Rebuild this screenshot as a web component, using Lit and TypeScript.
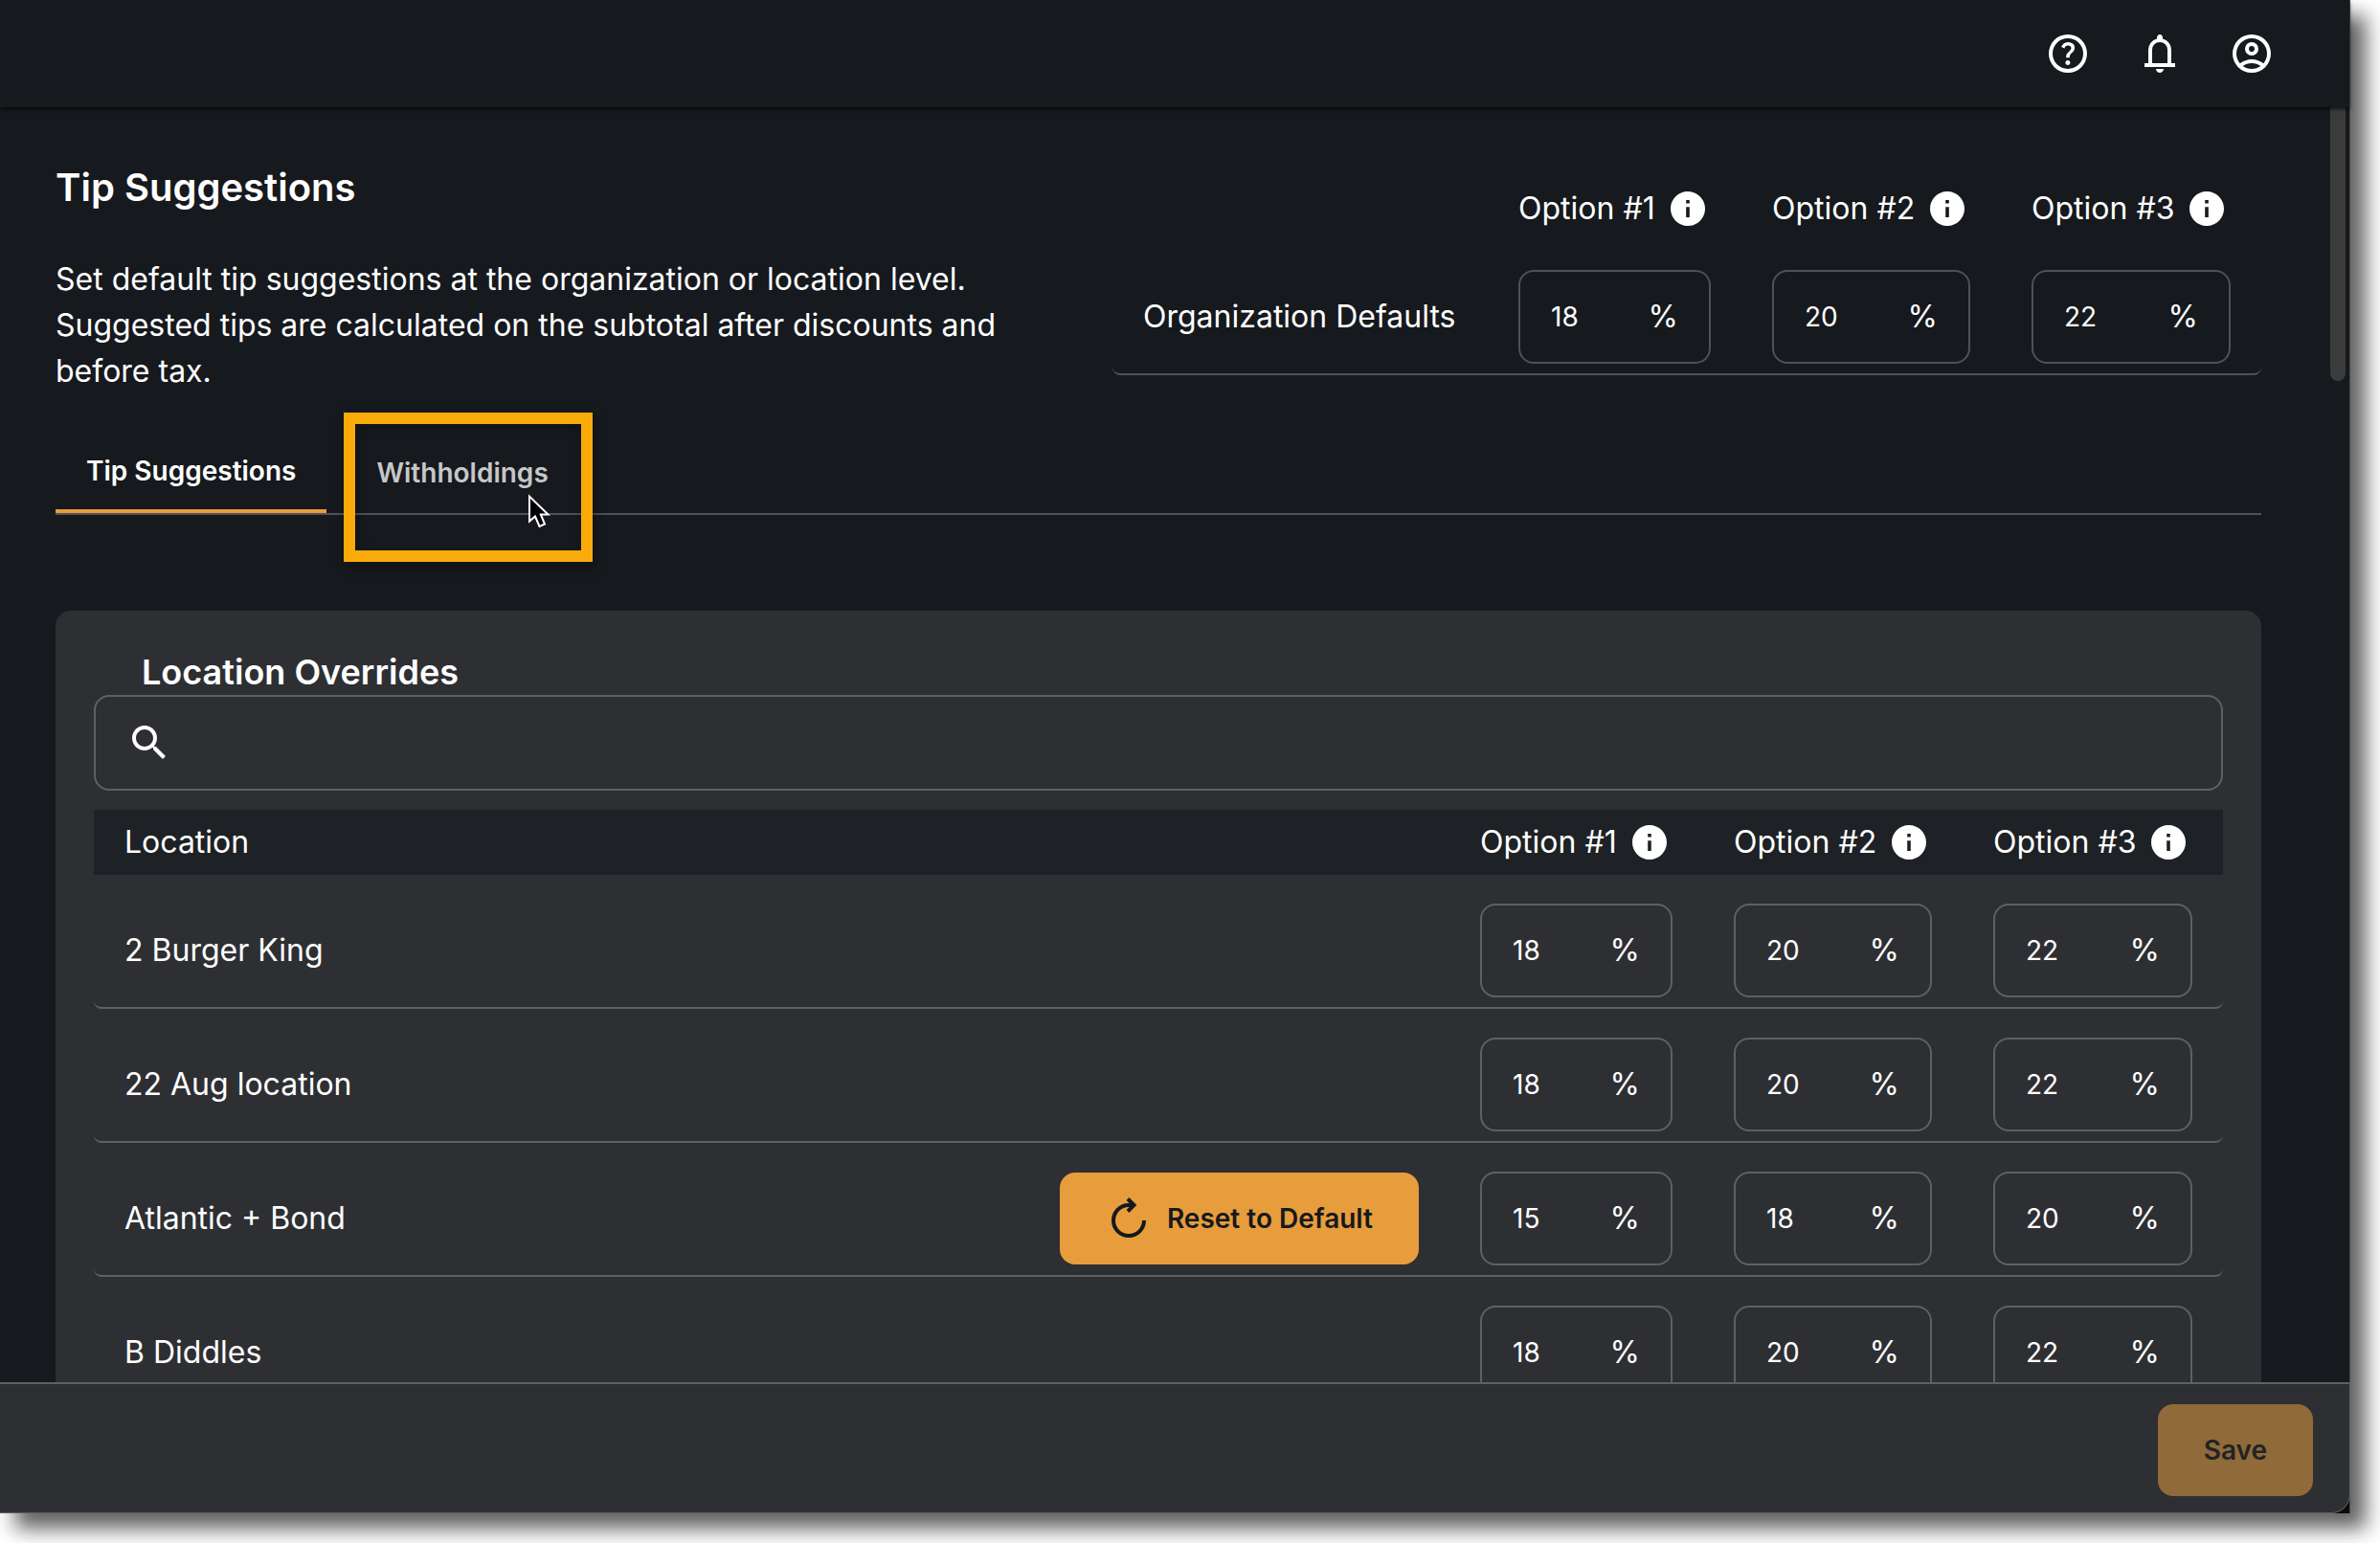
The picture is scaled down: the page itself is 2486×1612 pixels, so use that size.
import { LitElement, html, css, svg } from "lit";
import { customElement, state } from "lit/decorators.js";

interface LocationRow {
  name: string;
  tips: number[];
  overridden?: boolean;
}

const HELP =
  "M478-240q21 0 35.5-14.5T528-290q0-21-14.5-35.5T478-340q-21 0-35.5 14.5T428-290q0 21 14.5 35.5T478-240Zm-36-154h74q0-33 7.5-52t42.5-52q26-26 41-49.5t15-56.5q0-56-41-86t-97-30q-57 0-92.5 30T342-618l66 26q5-18 22.5-39t53.5-21q32 0 48 17.5t16 38.5q0 20-12 37.5T506-526q-44 39-54 59t-10 73Zm38 314q-83 0-156-31.5T197-197q-54-54-85.5-127T80-480q0-83 31.5-156T197-763q54-54 127-85.5T480-880q83 0 156 31.5T763-763q54 54 85.5 127T880-480q0 83-31.5 156T763-197q-54 54-127 85.5T480-80Zm0-80q134 0 227-93t93-227q0-134-93-227t-227-93q-134 0-227 93t-93 227q0 134 93 227t227 93Z";
const BELL =
  "M160-200v-80h80v-280q0-83 50-147.5T420-792v-28q0-25 17.5-42.5T480-880t42.5 17.5T540-820v28q80 20 130 84.5T720-560v280h80v80H160Zm320 120q-33 0-56.5-23.5T400-160h160q0 33-23.5 56.5T480-80ZM320-280h320v-280q0-66-47-113t-113-47q-66 0-113 47t-47 113v280Z";
const ACCOUNT =
  "M234-276q51-39 114-61.5T480-360q69 0 132 22.5T726-276q35-41 54.5-93T800-480q0-133-93.5-226.5T480-800q-133 0-226.5 93.5T160-480q0 59 19.5 111t54.5 93Zm246-164q-59 0-99.5-40.5T340-580q0-59 40.5-99.5T480-720q59 0 99.5 40.5T620-580q0 59-40.5 99.5T480-440Zm0 360q-83 0-156-31.5T197-197q-54-54-85.5-127T80-480q0-83 31.5-156T197-763q54-54 127-85.5T480-880q83 0 156 31.5T763-763q54 54 85.5 127T880-480q0 83-31.5 156T763-197q-54 54-127 85.5T480-80Zm0-80q53 0 100-15.5t86-44.5q-39-29-86-44.5T480-280q-53 0-100 15.5T294-220q39 29 86 44.5T480-160Zm0-360q26 0 43-17t17-43q0-26-17-43t-43-17q-26 0-43 17t-17 43q0 26 17 43t43 17Z";

const symbol = (path: string) => html`
  <svg class="icon" viewBox="0 -960 960 960" aria-hidden="true">${svg`<path d=${path} />`}</svg>
`;

@customElement("app-root")
export class AppRoot extends LitElement {
  static styles = css`
    :host {
      display: block;
      height: 100vh;
      box-sizing: border-box;
      padding: 0 31px 31px 0;
      overflow: hidden;
      background: #fff;
      color: #fff;
      font: 400 32px/48px Inter, "Liberation Sans", sans-serif;
    }
    *, *::before, *::after { box-sizing: border-box; }
    h1, h2, p { margin: 0; }
    button, input { font: inherit; color: inherit; }
    button { border: 0; padding: 0; background: none; }
    .window {
      height: 100%;
      display: flex;
      flex-direction: column;
      background: #0b0b0c;
      box-shadow: 16px 16px 20px rgba(0, 0, 0, 0.62);
      border-right: 1px solid #4a4c4f;
    }
    .topbar {
      flex: none;
      height: 112px;
      display: flex;
      align-items: center;
      justify-content: flex-end;
      gap: 48px;
      padding-right: 78px;
      background: #16191d;
      box-shadow: 0 2px 4px rgba(0, 0, 0, 0.7);
      z-index: 1;
    }
    .icon { display: block; width: 48px; height: 48px; fill: currentColor; }
    .body { flex: 1; min-height: 0; display: flex; overflow: hidden; background: #16191d; }
    .content { flex: 1; min-width: 0; padding: 60px 72px 0 58px; }
    .track { flex: none; width: 20px; }
    .thumb { width: 16px; height: 286px; border-radius: 0 0 8px 8px; background: #3b3b3b; }
    .intro {
      display: grid;
      grid-template-columns: minmax(0, 1004fr) minmax(0, 1200fr);
      align-items: start;
      gap: 100px;
    }
    .title { font-size: 40px; font-weight: 600; line-height: 48px; margin-bottom: 48px; }
    table { width: 100%; border-spacing: 0; table-layout: fixed; }
    .defaults { margin-top: 12px; }
    th, td { padding: 0 32px; text-align: left; font-weight: inherit; }
    th { height: 68px; }
    td { height: 140px; padding-top: 30px; padding-bottom: 10px; border-bottom: 2px solid #505154; }
    tr > td:first-child { border-bottom-left-radius: 8px; }
    tr > td:last-child { border-bottom-right-radius: 8px; }
    .col-one { width: 265px; }
    .col-two { width: 271px; }
    .col-three { width: 272px; }
    .option { display: flex; align-items: center; gap: 16px; white-space: nowrap; }
    .info { flex: none; width: 36px; height: 36px; fill: currentColor; }
    .field {
      height: 98px;
      display: flex;
      align-items: center;
      justify-content: space-between;
      border: 2px solid #505154;
      border-radius: 16px;
      padding: 0 32px;
    }
    .number {
      width: 72px;
      padding: 0;
      border: 0;
      outline: 0;
      background: none;
      font-size: 28px;
    }
    .tabs { display: flex; gap: 20px; margin-top: 36px; border-bottom: 2px solid #505154; }
    .tab {
      position: relative;
      height: 88px;
      padding: 4px 32px 0;
      font-size: 28px;
      font-weight: 600;
      line-height: 42px;
      color: #c6c7c8;
    }
    .tab.active { color: #fff; border-bottom: 4px solid #e79d3c; }
    .marker {
      position: absolute;
      inset: -17px -14px -51px -2px;
      border: 12px solid #f8ab0a;
      box-shadow: 2px 4px 12px rgba(0, 0, 0, 0.35), inset 2px 4px 12px rgba(0, 0, 0, 0.25);
    }
    .pointer { position: absolute; left: 191px; top: 68px; width: 24px; height: 36px; }
    .card { margin-top: 100px; padding: 40px; border-radius: 16px 16px 0 0; background: #2e2f33; }
    .heading { padding-left: 50px; font-size: 36px; font-weight: 600; line-height: 48px; }
    .card td, .card .field { border-color: #5f6063; }
    .search {
      height: 100px;
      display: flex;
      align-items: center;
      gap: 16px;
      margin-bottom: 20px;
      padding: 0 32px;
      border: 2px solid #5f6063;
      border-radius: 16px;
    }
    .query { flex: 1; height: 60px; border: 0; outline: 0; background: none; }
    .card th { background: #1e2125; }
    .place { display: flex; align-items: center; justify-content: space-between; }
    .primary {
      height: 96px;
      display: flex;
      align-items: center;
      gap: 16px;
      padding: 0 48px;
      border-radius: 16px;
      background: #e79d3c;
      color: #16191d;
      font-size: 28px;
      font-weight: 600;
    }
    .footer {
      flex: none;
      height: 137px;
      display: flex;
      align-items: center;
      justify-content: flex-end;
      margin-right: -1px;
      padding: 4px 38px 0 0;
      border: 1px solid #5f6063;
      border-width: 2px 1px 1px 0;
      background: #2e2f33;
      border-bottom-right-radius: 20px;
    }
    .primary:disabled { background: #906a38; color: #212327; }
  `;

  @state() private defaults = [18, 20, 22];
  @state() private rows: LocationRow[] = [
    { name: "2 Burger King", tips: [18, 20, 22] },
    { name: "22 Aug location", tips: [18, 20, 22] },
    { name: "Atlantic + Bond", tips: [15, 18, 20], overridden: true },
    { name: "B Diddles", tips: [18, 20, 22] },
  ];

  private columns() {
    return html`<colgroup><col /><col class="col-one" /><col class="col-two" /><col class="col-three" /></colgroup>`;
  }

  private optionHeads() {
    return [1, 2, 3].map(
      (n) => html`<th scope="col"><div class="option">Option #${n}
        <svg class="info" viewBox="2 2 20 20" aria-hidden="true">
          <path d="M12 2C6.48 2 2 6.48 2 12s4.480 10 10 10 10-4.480 10-10S17.520 2 12 2zm1 15h-2v-6h2v6zm0-8h-2V7h2v2z" />
        </svg></div></th>`
    );
  }

  private tipCells(owner: string, tips: number[]) {
    return tips.map(
      (tip, i) => html`<td><label class="field">
        <input class="number" inputmode="numeric" aria-label="${owner} option ${i + 1}" .value=${String(tip)} />
        <span>%</span></label></td>`
    );
  }

  private reset(row: LocationRow) {
    this.rows = this.rows.map((r) => (r === row ? { name: r.name, tips: [...this.defaults] } : r));
  }

  render() {
    return html`
      <div class="window">
        <header class="topbar">
          <button aria-label="Help">${symbol(HELP)}</button>
          <button aria-label="Notifications">${symbol(BELL)}</button>
          <button aria-label="Account">${symbol(ACCOUNT)}</button>
        </header>
        <div class="body">
          <main class="content">
            <section class="intro">
              <div>
                <h1 class="title">Tip Suggestions</h1>
                <p>Set default tip suggestions at the organization or location level. Suggested tips are calculated on the subtotal after discounts and before tax.</p>
              </div>
              <table class="defaults">
                ${this.columns()}
                <thead><tr><th></th>${this.optionHeads()}</tr></thead>
                <tbody><tr><td>Organization Defaults</td>${this.tipCells("Organization", this.defaults)}</tr></tbody>
              </table>
            </section>
            <nav class="tabs" role="tablist">
              <button class="tab active" role="tab" aria-selected="true">Tip Suggestions</button>
              <button class="tab" role="tab" aria-selected="false">Withholdings
                <span class="marker"></span>
                <svg class="pointer" viewBox="0 0 24 36" aria-hidden="true">
                  <path d="M1 2.500V28.500L7 23.500L11.500 34L17 31.500L12.800 21.500H20.500Z" fill="#000" stroke="#fff" stroke-width="2" />
                </svg>
              </button>
            </nav>
            <section class="card">
              <h2 class="heading">Location Overrides</h2>
              <label class="search">
                <svg class="icon" viewBox="0 0 24 24" aria-hidden="true">
                  <path d="M15.500 14h-.790l-.280-.270C15.410 12.590 16 11.110 16 9.500 16 5.910 13.090 3 9.500 3S3 5.910 3 9.500 5.910 16 9.500 16c1.610 0 3.090-.590 4.230-1.570l.270.280v.790l5 4.990L20.490 19l-4.990-5zm-6 0C7.010 14 5 11.990 5 9.500S7.010 5 9.500 5 14 7.010 14 9.500 11.990 14 9.500 14z" />
                </svg>
                <input class="query" type="search" aria-label="Search locations" />
              </label>
              <table>
                ${this.columns()}
                <thead><tr><th scope="col">Location</th>${this.optionHeads()}</tr></thead>
                <tbody>
                  ${this.rows.map(
                    (row) => html`<tr>
                      <td><div class="place">${row.name}
                        ${row.overridden
                          ? html`<button class="primary" @click=${() => this.reset(row)}>
                              <svg class="icon" viewBox="0 0 48 48" aria-hidden="true">
                                <path d="M40 26A16 16 0 1 1 24 10H29M23 3.500L29.500 10L23 16.500" fill="none" stroke="currentColor" stroke-width="4" />
                              </svg>
                              Reset to Default</button>`
                          : ""}</div></td>
                      ${this.tipCells(row.name, row.tips)}
                    </tr>`
                  )}
                </tbody>
              </table>
            </section>
          </main>
          <div class="track"><div class="thumb"></div></div>
        </div>
        <footer class="footer"><button class="primary" disabled>Save</button></footer>
      </div>
    `;
  }
}
